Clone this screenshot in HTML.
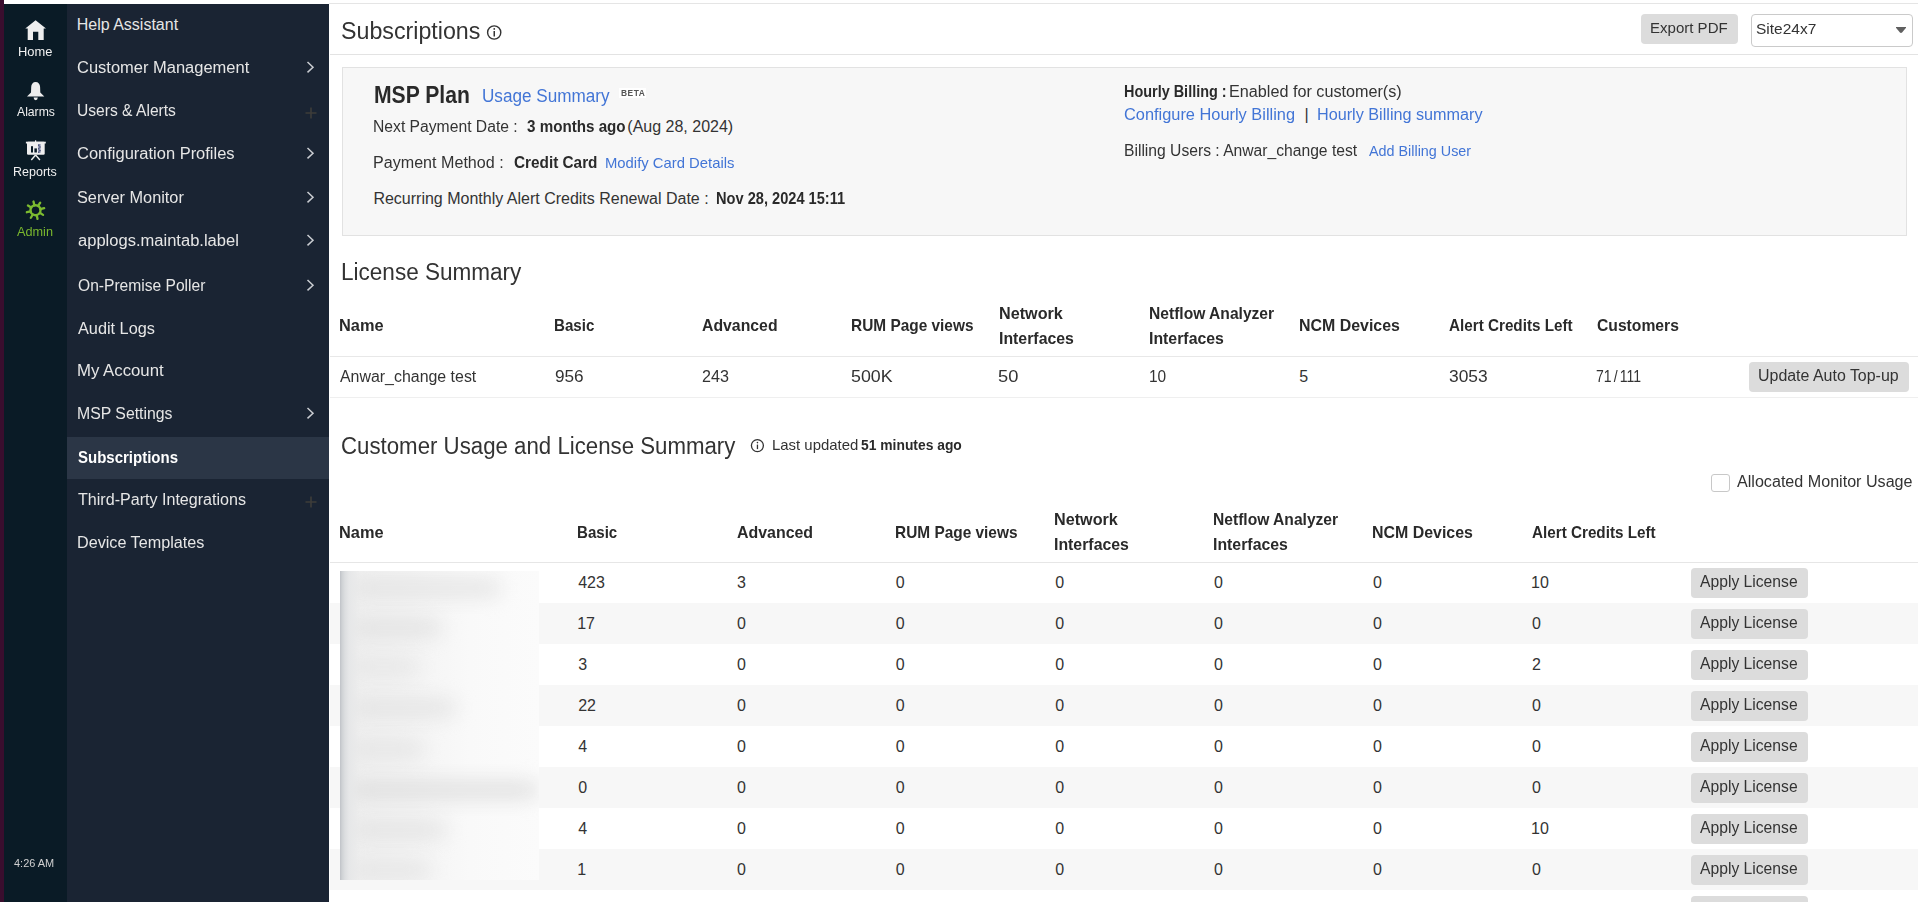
<!DOCTYPE html>
<html><head><meta charset="utf-8"><title>Subscriptions</title>
<style>
html,body{margin:0;padding:0;}
body{width:1918px;height:902px;position:relative;overflow:hidden;background:#fff;font-family:"Liberation Sans", sans-serif;}
.t{position:absolute;white-space:nowrap;line-height:1;transform-origin:0 0;}
</style></head><body>
<div style="position:absolute;left:0px;top:0px;width:4px;height:902px;background:#3a0e2e;"></div><div style="position:absolute;left:4px;top:4px;width:63px;height:898px;background:#0a1b26;"></div><div style="position:absolute;left:67px;top:4px;width:262px;height:898px;background:#1a2433;"></div><div style="position:absolute;left:67px;top:437px;width:262px;height:42px;background:#2b3646;"></div><div style="position:absolute;left:329px;top:3px;width:1589px;height:1px;background:#e5e5e5;"></div><div style="position:absolute;left:330px;top:54px;width:1588px;height:1px;background:#e3e3e3;"></div><div style="position:absolute;left:1641px;top:14px;width:97px;height:30px;background:#dcdcdc;border-radius:4px;"></div><div style="position:absolute;left:1751px;top:14px;width:160px;height:31px;border:1px solid #cacaca;border-radius:4px;background:#fff;"></div><div style="position:absolute;left:342px;top:67px;width:1563px;height:167px;background:#f7f7f7;border:1px solid #e2e2e2;"></div><div style="position:absolute;left:619px;top:88px;width:27px;height:10px;background:#fff;"></div><div style="position:absolute;left:330px;top:356px;width:1588px;height:1px;background:#e8e8e8;"></div><div style="position:absolute;left:330px;top:397px;width:1588px;height:1px;background:#efefef;"></div><div style="position:absolute;left:1749px;top:362px;width:160px;height:30px;background:#dcdcdc;border-radius:4px;"></div><div style="position:absolute;left:1711px;top:474px;width:17px;height:16px;border:1px solid #c8c8c8;border-radius:3px;background:#fff;"></div><div style="position:absolute;left:1691px;top:568px;width:117px;height:30px;background:#dcdcdc;border-radius:4px;"></div><div style="position:absolute;left:330px;top:603px;width:1588px;height:41px;background:#f7f7f7;"></div><div style="position:absolute;left:1691px;top:609px;width:117px;height:30px;background:#dcdcdc;border-radius:4px;"></div><div style="position:absolute;left:1691px;top:650px;width:117px;height:30px;background:#dcdcdc;border-radius:4px;"></div><div style="position:absolute;left:330px;top:685px;width:1588px;height:41px;background:#f7f7f7;"></div><div style="position:absolute;left:1691px;top:691px;width:117px;height:30px;background:#dcdcdc;border-radius:4px;"></div><div style="position:absolute;left:1691px;top:732px;width:117px;height:30px;background:#dcdcdc;border-radius:4px;"></div><div style="position:absolute;left:330px;top:767px;width:1588px;height:41px;background:#f7f7f7;"></div><div style="position:absolute;left:1691px;top:773px;width:117px;height:30px;background:#dcdcdc;border-radius:4px;"></div><div style="position:absolute;left:1691px;top:814px;width:117px;height:30px;background:#dcdcdc;border-radius:4px;"></div><div style="position:absolute;left:330px;top:849px;width:1588px;height:41px;background:#f7f7f7;"></div><div style="position:absolute;left:1691px;top:855px;width:117px;height:30px;background:#dcdcdc;border-radius:4px;"></div><div style="position:absolute;left:1691px;top:896px;width:117px;height:30px;background:#dcdcdc;border-radius:4px;"></div><div style="position:absolute;left:330px;top:562px;width:1588px;height:1px;background:#e6e6e6;"></div><div style="position:absolute;left:340px;top:571px;width:199px;height:309px;overflow:hidden;background:linear-gradient(to right,#efefef 0px,#f3f3f3 60px,#f9f9f9 130px,#fbfbfb 199px);"><div style="position:absolute;left:10px;top:10px;width:150px;height:14px;background:#e0e0e0;border-radius:7px;filter:blur(10px);"></div><div style="position:absolute;left:10px;top:50px;width:90px;height:14px;background:#dedede;border-radius:7px;filter:blur(10px);"></div><div style="position:absolute;left:8px;top:89px;width:70px;height:14px;background:#e4e4e4;border-radius:7px;filter:blur(10px);"></div><div style="position:absolute;left:10px;top:130px;width:105px;height:14px;background:#e0e0e0;border-radius:7px;filter:blur(10px);"></div><div style="position:absolute;left:8px;top:171px;width:75px;height:14px;background:#e2e2e2;border-radius:7px;filter:blur(10px);"></div><div style="position:absolute;left:8px;top:212px;width:190px;height:14px;background:#dadada;border-radius:7px;filter:blur(10px);"></div><div style="position:absolute;left:10px;top:252px;width:95px;height:14px;background:#e0e0e0;border-radius:7px;filter:blur(10px);"></div><div style="position:absolute;left:10px;top:292px;width:80px;height:14px;background:#e2e2e2;border-radius:7px;filter:blur(10px);"></div><div style="position:absolute;left:0;top:0;width:20px;height:309px;background:linear-gradient(to right,#bfc2c7 0px,#cfd2d5 2px,#dcdee0 5px,#e6e7e8 9px,rgba(236,236,236,0) 20px);"></div></div>

<svg style="position:absolute;left:0;top:0" width="67" height="250">
 <path d="M35.6 20.3L25.3 28.6H27.7V40H33V31.7H38.3V40H43.7V28.6H46Z" fill="#eeeeee"/>
 <path d="M35.6 82C33 82 31.3 84 31.2 87L31 92.5L27 96.6H44.3L40.3 92.5L40.1 87C40 84 38.3 82 35.6 82Z" fill="#eeeeee"/>
 <path d="M33.6 97.6H37.8Q37.6 100.2 35.7 100.2Q33.8 100.2 33.6 97.6Z" fill="#eeeeee"/>
 <rect x="25.9" y="141.7" width="19.9" height="1.8" fill="#eeeeee"/>
 <rect x="27" y="141.7" width="17.7" height="13" rx="1.2" fill="#eeeeee"/>
 <path d="M31.3 160L35.6 155M39.9 160L35.6 155" stroke="#eeeeee" stroke-width="1.4"/>
 <rect x="35" y="140.3" width="1.2" height="2" fill="#eeeeee"/>
 <rect x="31" y="146.2" width="2" height="6.3" fill="#0a1b26"/>
 <rect x="34.4" y="148.4" width="2.5" height="4.1" fill="#0a1b26"/>
 <rect x="38.1" y="144" width="2.5" height="8.8" fill="#8a93b0"/>
 <rect x="38.1" y="144.6" width="1.2" height="1.2" fill="#3a3f6a"/><rect x="39.4" y="146.4" width="1.2" height="1.2" fill="#3a3f6a"/><rect x="38.1" y="148.2" width="1.2" height="1.2" fill="#3a3f6a"/><rect x="39.4" y="150" width="1.2" height="1.2" fill="#3a3f6a"/><rect x="38.1" y="151.6" width="1.2" height="1.2" fill="#3a3f6a"/>
 <g transform="translate(35.5 210.2)">
  <circle r="5" fill="none" stroke="#7cbb30" stroke-width="2.4"/>
  <line x1="0" y1="-5" x2="0" y2="-8.9" stroke="#7cbb30" stroke-width="2.3" stroke-linecap="round" transform="rotate(31.8)"/><line x1="0" y1="-5" x2="0" y2="-8.9" stroke="#7cbb30" stroke-width="2.3" stroke-linecap="round" transform="rotate(76.8)"/><line x1="0" y1="-5" x2="0" y2="-8.9" stroke="#7cbb30" stroke-width="2.3" stroke-linecap="round" transform="rotate(121.8)"/><line x1="0" y1="-5" x2="0" y2="-8.9" stroke="#7cbb30" stroke-width="2.3" stroke-linecap="round" transform="rotate(166.8)"/><line x1="0" y1="-5" x2="0" y2="-8.9" stroke="#7cbb30" stroke-width="2.3" stroke-linecap="round" transform="rotate(211.8)"/><line x1="0" y1="-5" x2="0" y2="-8.9" stroke="#7cbb30" stroke-width="2.3" stroke-linecap="round" transform="rotate(256.8)"/><line x1="0" y1="-5" x2="0" y2="-8.9" stroke="#7cbb30" stroke-width="2.3" stroke-linecap="round" transform="rotate(301.8)"/><line x1="0" y1="-5" x2="0" y2="-8.9" stroke="#7cbb30" stroke-width="2.3" stroke-linecap="round" transform="rotate(346.8)"/>
 </g>
</svg>
<svg style="position:absolute;left:0;top:0" width="1918" height="902"><polyline points="307.5,62.0 313,67.2 307.5,72.4" fill="none" stroke="#c9ccd1" stroke-width="1.5"/><path d="M305.5 113H316.5M311 107.5V118.5" stroke="#3e3d3a" stroke-width="1.6"/><polyline points="307.5,148.0 313,153.2 307.5,158.39999999999998" fill="none" stroke="#c9ccd1" stroke-width="1.5"/><polyline points="307.5,192.0 313,197.2 307.5,202.39999999999998" fill="none" stroke="#c9ccd1" stroke-width="1.5"/><polyline points="307.5,235.0 313,240.2 307.5,245.39999999999998" fill="none" stroke="#c9ccd1" stroke-width="1.5"/><polyline points="307.5,280.0 313,285.2 307.5,290.4" fill="none" stroke="#c9ccd1" stroke-width="1.5"/><polyline points="307.5,408.0 313,413.2 307.5,418.4" fill="none" stroke="#c9ccd1" stroke-width="1.5"/><path d="M305.5 502H316.5M311 496.5V507.5" stroke="#3e3d3a" stroke-width="1.6"/><circle cx="494.2" cy="32.5" r="6.6" fill="none" stroke="#333" stroke-width="1.4"/><rect x="493.5" y="31" width="1.5" height="5.5" fill="#333"/><circle cx="494.25" cy="28.9" r="0.9" fill="#333"/><path d="M1896 27H1906V27.8L1902.3 32.2Q1901 33.6 1899.7 32.2L1896 27.8Z" fill="#606060"/><circle cx="757.4" cy="445.6" r="6" fill="none" stroke="#333" stroke-width="1.3"/><rect x="756.8" y="444.6" width="1.3" height="4.5" fill="#333"/><circle cx="757.45" cy="442.6" r="0.8" fill="#333"/></svg>
<div class="t" style="left:17.93px;top:46px;font-size:12px;color:#f0f0f0;transform:scaleX(1.0742);">Home</div><div class="t" style="left:17.00px;top:106px;font-size:12px;color:#f0f0f0;transform:scaleX(1.0162);">Alarms</div><div class="t" style="left:13.16px;top:166px;font-size:12px;color:#f0f0f0;transform:scaleX(1.0415);">Reports</div><div class="t" style="left:17.30px;top:226px;font-size:12px;color:#7ab72e;transform:scaleX(1.0588);">Admin</div><div class="t" style="left:14.20px;top:858px;font-size:11px;color:#d0d0d0;transform:scaleX(0.9950);">4:26 AM</div><div class="t" style="left:76.70px;top:17px;font-size:16px;color:#e6e6e6;">Help Assistant</div><div class="t" style="left:76.67px;top:60px;font-size:16px;color:#e6e6e6;transform:scaleX(1.0301);">Customer Management</div><div class="t" style="left:76.72px;top:103px;font-size:16px;color:#e6e6e6;transform:scaleX(0.9760);">Users &amp; Alerts</div><div class="t" style="left:76.67px;top:146px;font-size:16px;color:#e6e6e6;transform:scaleX(1.0303);">Configuration Profiles</div><div class="t" style="left:76.68px;top:190px;font-size:16px;color:#e6e6e6;transform:scaleX(1.0183);">Server Monitor</div><div class="t" style="left:77.70px;top:233px;font-size:16px;color:#e6e6e6;transform:scaleX(1.0335);">applogs.maintab.label</div><div class="t" style="left:77.70px;top:278px;font-size:16px;color:#e6e6e6;transform:scaleX(0.9748);">On-Premise Poller</div><div class="t" style="left:77.70px;top:321px;font-size:16px;color:#e6e6e6;transform:scaleX(1.0173);">Audit Logs</div><div class="t" style="left:76.65px;top:363px;font-size:16px;color:#e6e6e6;transform:scaleX(1.0476);">My Account</div><div class="t" style="left:76.71px;top:406px;font-size:16px;color:#e6e6e6;transform:scaleX(0.9875);">MSP Settings</div><div class="t" style="left:77.70px;top:450px;font-size:16px;color:#ffffff;font-weight:700;transform:scaleX(0.9377);">Subscriptions</div><div class="t" style="left:77.70px;top:492px;font-size:16px;color:#e6e6e6;transform:scaleX(1.0048);">Third-Party Integrations</div><div class="t" style="left:76.69px;top:535px;font-size:16px;color:#e6e6e6;transform:scaleX(1.0104);">Device Templates</div><div class="t" style="left:341.41px;top:20px;font-size:23.5px;color:#333;transform:scaleX(0.9879);">Subscriptions</div><div class="t" style="left:1650.43px;top:20px;font-size:15.5px;color:#333;transform:scaleX(0.9696);">Export PDF</div><div class="t" style="left:1756.17px;top:21px;font-size:15px;color:#333;transform:scaleX(1.0333);">Site24x7</div><div class="t" style="left:373.90px;top:84px;font-size:23.5px;color:#2a2a2a;font-weight:700;transform:scaleX(0.8990);">MSP Plan</div><div class="t" style="left:482.42px;top:88px;font-size:17.5px;color:#4275d6;transform:scaleX(0.9791);">Usage Summary</div><div class="t" style="left:620.60px;top:89px;font-size:9px;color:#555;font-weight:700;transform:scaleX(0.9360);letter-spacing:0.5px;">BETA</div><div class="t" style="left:373.42px;top:119px;font-size:16px;color:#333;transform:scaleX(0.9801);">Next Payment Date :</div><div class="t" style="left:527.10px;top:119px;font-size:16px;color:#2a2a2a;font-weight:700;transform:scaleX(0.9481);">3 months ago</div><div class="t" style="left:627.30px;top:119px;font-size:16px;color:#333;">(Aug 28, 2024)</div><div class="t" style="left:373.39px;top:155px;font-size:16px;color:#333;transform:scaleX(1.0063);">Payment Method :</div><div class="t" style="left:514.10px;top:155px;font-size:16px;color:#2a2a2a;font-weight:700;transform:scaleX(0.9581);">Credit Card</div><div class="t" style="left:605.11px;top:155px;font-size:15px;color:#4275d6;transform:scaleX(0.9892);">Modify Card Details</div><div class="t" style="left:373.40px;top:191px;font-size:16px;color:#333;">Recurring Monthly Alert Credits Renewal Date :</div><div class="t" style="left:716.49px;top:191px;font-size:16px;color:#2a2a2a;font-weight:700;transform:scaleX(0.9129);">Nov 28, 2024 15:11</div><div class="t" style="left:1124.10px;top:84px;font-size:16px;color:#2a2a2a;font-weight:700;transform:scaleX(0.9018);">Hourly Billing :</div><div class="t" style="left:1228.99px;top:84px;font-size:16px;color:#333;transform:scaleX(1.0118);">Enabled for customer(s)</div><div class="t" style="left:1123.98px;top:107px;font-size:16px;color:#4275d6;transform:scaleX(1.0229);">Configure Hourly Billing</div><div class="t" style="left:1304.50px;top:107px;font-size:16px;color:#333;">|</div><div class="t" style="left:1316.99px;top:107px;font-size:16px;color:#4275d6;transform:scaleX(1.0123);">Hourly Billing summary</div><div class="t" style="left:1124.02px;top:143px;font-size:16px;color:#333;transform:scaleX(0.9782);">Billing Users : Anwar_change test</div><div class="t" style="left:1368.70px;top:143px;font-size:15px;color:#4275d6;transform:scaleX(0.9570);">Add Billing User</div><div class="t" style="left:340.98px;top:261px;font-size:23.5px;color:#333;transform:scaleX(0.9591);">License Summary</div><div class="t" style="left:338.84px;top:317px;font-size:17px;color:#2a2a2a;font-weight:700;transform:scaleX(0.9622);">Name</div><div class="t" style="left:554.41px;top:317px;font-size:17px;color:#2a2a2a;font-weight:700;transform:scaleX(0.8886);">Basic</div><div class="t" style="left:702.00px;top:317px;font-size:17px;color:#2a2a2a;font-weight:700;transform:scaleX(0.9300);">Advanced</div><div class="t" style="left:851.29px;top:317px;font-size:17px;color:#2a2a2a;font-weight:700;transform:scaleX(0.9067);">RUM Page views</div><div class="t" style="left:998.55px;top:305px;font-size:17px;color:#2a2a2a;font-weight:700;transform:scaleX(0.9515);">Network</div><div class="t" style="left:998.57px;top:330px;font-size:17px;color:#2a2a2a;font-weight:700;transform:scaleX(0.9329);">Interfaces</div><div class="t" style="left:1148.98px;top:305px;font-size:17px;color:#2a2a2a;font-weight:700;transform:scaleX(0.9176);">Netflow Analyzer</div><div class="t" style="left:1148.97px;top:330px;font-size:17px;color:#2a2a2a;font-weight:700;transform:scaleX(0.9329);">Interfaces</div><div class="t" style="left:1299.26px;top:317px;font-size:17px;color:#2a2a2a;font-weight:700;transform:scaleX(0.9368);">NCM Devices</div><div class="t" style="left:1449.10px;top:317px;font-size:17px;color:#2a2a2a;font-weight:700;transform:scaleX(0.8964);">Alert Credits Left</div><div class="t" style="left:1596.90px;top:317px;font-size:17px;color:#2a2a2a;font-weight:700;transform:scaleX(0.9216);">Customers</div><div class="t" style="left:339.80px;top:369px;font-size:16px;color:#333;transform:scaleX(0.9949);">Anwar_change test</div><div class="t" style="left:555.30px;top:369px;font-size:16px;color:#333;transform:scaleX(1.0731);">956</div><div class="t" style="left:702.00px;top:369px;font-size:16px;color:#333;transform:scaleX(1.0077);">243</div><div class="t" style="left:851.09px;top:369px;font-size:16px;color:#333;transform:scaleX(1.1111);">500K</div><div class="t" style="left:998.36px;top:369px;font-size:16px;color:#333;transform:scaleX(1.1412);">50</div><div class="t" style="left:1148.94px;top:369px;font-size:16px;color:#333;transform:scaleX(0.9647);">10</div><div class="t" style="left:1299.20px;top:369px;font-size:16px;color:#333;">5</div><div class="t" style="left:1449.10px;top:369px;font-size:16px;color:#333;transform:scaleX(1.0857);">3053</div><div class="t" style="left:1596.02px;top:369px;font-size:16px;color:#333;transform:scaleX(0.8760);word-spacing:-2px;">71 / 111</div><div class="t" style="left:1757.80px;top:368px;font-size:16px;color:#333;transform:scaleX(0.9964);">Update Auto Top-up</div><div class="t" style="left:341.05px;top:435px;font-size:23.5px;color:#333;transform:scaleX(0.9466);">Customer Usage and License Summary</div><div class="t" style="left:771.57px;top:438px;font-size:14.5px;color:#333;transform:scaleX(1.0293);">Last updated</div><div class="t" style="left:861.00px;top:438px;font-size:14.5px;color:#2a2a2a;font-weight:700;transform:scaleX(0.9552);">51 minutes ago</div><div class="t" style="left:1736.60px;top:474px;font-size:16px;color:#333;transform:scaleX(1.0069);">Allocated Monitor Usage</div><div class="t" style="left:338.84px;top:524px;font-size:17px;color:#2a2a2a;font-weight:700;transform:scaleX(0.9622);">Name</div><div class="t" style="left:577.31px;top:524px;font-size:17px;color:#2a2a2a;font-weight:700;transform:scaleX(0.8864);">Basic</div><div class="t" style="left:736.90px;top:524px;font-size:17px;color:#2a2a2a;font-weight:700;transform:scaleX(0.9363);">Advanced</div><div class="t" style="left:894.79px;top:524px;font-size:17px;color:#2a2a2a;font-weight:700;transform:scaleX(0.9067);">RUM Page views</div><div class="t" style="left:1054.35px;top:511px;font-size:17px;color:#2a2a2a;font-weight:700;transform:scaleX(0.9515);">Network</div><div class="t" style="left:1054.37px;top:536px;font-size:17px;color:#2a2a2a;font-weight:700;transform:scaleX(0.9329);">Interfaces</div><div class="t" style="left:1212.98px;top:511px;font-size:17px;color:#2a2a2a;font-weight:700;transform:scaleX(0.9176);">Netflow Analyzer</div><div class="t" style="left:1212.97px;top:536px;font-size:17px;color:#2a2a2a;font-weight:700;transform:scaleX(0.9329);">Interfaces</div><div class="t" style="left:1371.96px;top:524px;font-size:17px;color:#2a2a2a;font-weight:700;transform:scaleX(0.9368);">NCM Devices</div><div class="t" style="left:1532.00px;top:524px;font-size:17px;color:#2a2a2a;font-weight:700;transform:scaleX(0.8964);">Alert Credits Left</div><div class="t" style="left:578.20px;top:575px;font-size:16px;color:#333;">423</div><div class="t" style="left:736.90px;top:575px;font-size:16px;color:#333;">3</div><div class="t" style="left:895.70px;top:575px;font-size:16px;color:#333;">0</div><div class="t" style="left:1055.30px;top:575px;font-size:16px;color:#333;">0</div><div class="t" style="left:1213.90px;top:575px;font-size:16px;color:#333;">0</div><div class="t" style="left:1372.90px;top:575px;font-size:16px;color:#333;">0</div><div class="t" style="left:1531.00px;top:575px;font-size:16px;color:#333;">10</div><div class="t" style="left:1700.40px;top:574px;font-size:16px;color:#333;transform:scaleX(0.9798);">Apply License</div><div class="t" style="left:577.20px;top:616px;font-size:16px;color:#333;">17</div><div class="t" style="left:736.90px;top:616px;font-size:16px;color:#333;">0</div><div class="t" style="left:895.70px;top:616px;font-size:16px;color:#333;">0</div><div class="t" style="left:1055.30px;top:616px;font-size:16px;color:#333;">0</div><div class="t" style="left:1213.90px;top:616px;font-size:16px;color:#333;">0</div><div class="t" style="left:1372.90px;top:616px;font-size:16px;color:#333;">0</div><div class="t" style="left:1532.00px;top:616px;font-size:16px;color:#333;">0</div><div class="t" style="left:1700.40px;top:615px;font-size:16px;color:#333;transform:scaleX(0.9798);">Apply License</div><div class="t" style="left:578.20px;top:657px;font-size:16px;color:#333;">3</div><div class="t" style="left:736.90px;top:657px;font-size:16px;color:#333;">0</div><div class="t" style="left:895.70px;top:657px;font-size:16px;color:#333;">0</div><div class="t" style="left:1055.30px;top:657px;font-size:16px;color:#333;">0</div><div class="t" style="left:1213.90px;top:657px;font-size:16px;color:#333;">0</div><div class="t" style="left:1372.90px;top:657px;font-size:16px;color:#333;">0</div><div class="t" style="left:1532.00px;top:657px;font-size:16px;color:#333;">2</div><div class="t" style="left:1700.40px;top:656px;font-size:16px;color:#333;transform:scaleX(0.9798);">Apply License</div><div class="t" style="left:578.20px;top:698px;font-size:16px;color:#333;">22</div><div class="t" style="left:736.90px;top:698px;font-size:16px;color:#333;">0</div><div class="t" style="left:895.70px;top:698px;font-size:16px;color:#333;">0</div><div class="t" style="left:1055.30px;top:698px;font-size:16px;color:#333;">0</div><div class="t" style="left:1213.90px;top:698px;font-size:16px;color:#333;">0</div><div class="t" style="left:1372.90px;top:698px;font-size:16px;color:#333;">0</div><div class="t" style="left:1532.00px;top:698px;font-size:16px;color:#333;">0</div><div class="t" style="left:1700.40px;top:697px;font-size:16px;color:#333;transform:scaleX(0.9798);">Apply License</div><div class="t" style="left:578.20px;top:739px;font-size:16px;color:#333;">4</div><div class="t" style="left:736.90px;top:739px;font-size:16px;color:#333;">0</div><div class="t" style="left:895.70px;top:739px;font-size:16px;color:#333;">0</div><div class="t" style="left:1055.30px;top:739px;font-size:16px;color:#333;">0</div><div class="t" style="left:1213.90px;top:739px;font-size:16px;color:#333;">0</div><div class="t" style="left:1372.90px;top:739px;font-size:16px;color:#333;">0</div><div class="t" style="left:1532.00px;top:739px;font-size:16px;color:#333;">0</div><div class="t" style="left:1700.40px;top:738px;font-size:16px;color:#333;transform:scaleX(0.9798);">Apply License</div><div class="t" style="left:578.20px;top:780px;font-size:16px;color:#333;">0</div><div class="t" style="left:736.90px;top:780px;font-size:16px;color:#333;">0</div><div class="t" style="left:895.70px;top:780px;font-size:16px;color:#333;">0</div><div class="t" style="left:1055.30px;top:780px;font-size:16px;color:#333;">0</div><div class="t" style="left:1213.90px;top:780px;font-size:16px;color:#333;">0</div><div class="t" style="left:1372.90px;top:780px;font-size:16px;color:#333;">0</div><div class="t" style="left:1532.00px;top:780px;font-size:16px;color:#333;">0</div><div class="t" style="left:1700.40px;top:779px;font-size:16px;color:#333;transform:scaleX(0.9798);">Apply License</div><div class="t" style="left:578.20px;top:821px;font-size:16px;color:#333;">4</div><div class="t" style="left:736.90px;top:821px;font-size:16px;color:#333;">0</div><div class="t" style="left:895.70px;top:821px;font-size:16px;color:#333;">0</div><div class="t" style="left:1055.30px;top:821px;font-size:16px;color:#333;">0</div><div class="t" style="left:1213.90px;top:821px;font-size:16px;color:#333;">0</div><div class="t" style="left:1372.90px;top:821px;font-size:16px;color:#333;">0</div><div class="t" style="left:1531.00px;top:821px;font-size:16px;color:#333;">10</div><div class="t" style="left:1700.40px;top:820px;font-size:16px;color:#333;transform:scaleX(0.9798);">Apply License</div><div class="t" style="left:577.20px;top:862px;font-size:16px;color:#333;">1</div><div class="t" style="left:736.90px;top:862px;font-size:16px;color:#333;">0</div><div class="t" style="left:895.70px;top:862px;font-size:16px;color:#333;">0</div><div class="t" style="left:1055.30px;top:862px;font-size:16px;color:#333;">0</div><div class="t" style="left:1213.90px;top:862px;font-size:16px;color:#333;">0</div><div class="t" style="left:1372.90px;top:862px;font-size:16px;color:#333;">0</div><div class="t" style="left:1532.00px;top:862px;font-size:16px;color:#333;">0</div><div class="t" style="left:1700.40px;top:861px;font-size:16px;color:#333;transform:scaleX(0.9798);">Apply License</div>
</body></html>
